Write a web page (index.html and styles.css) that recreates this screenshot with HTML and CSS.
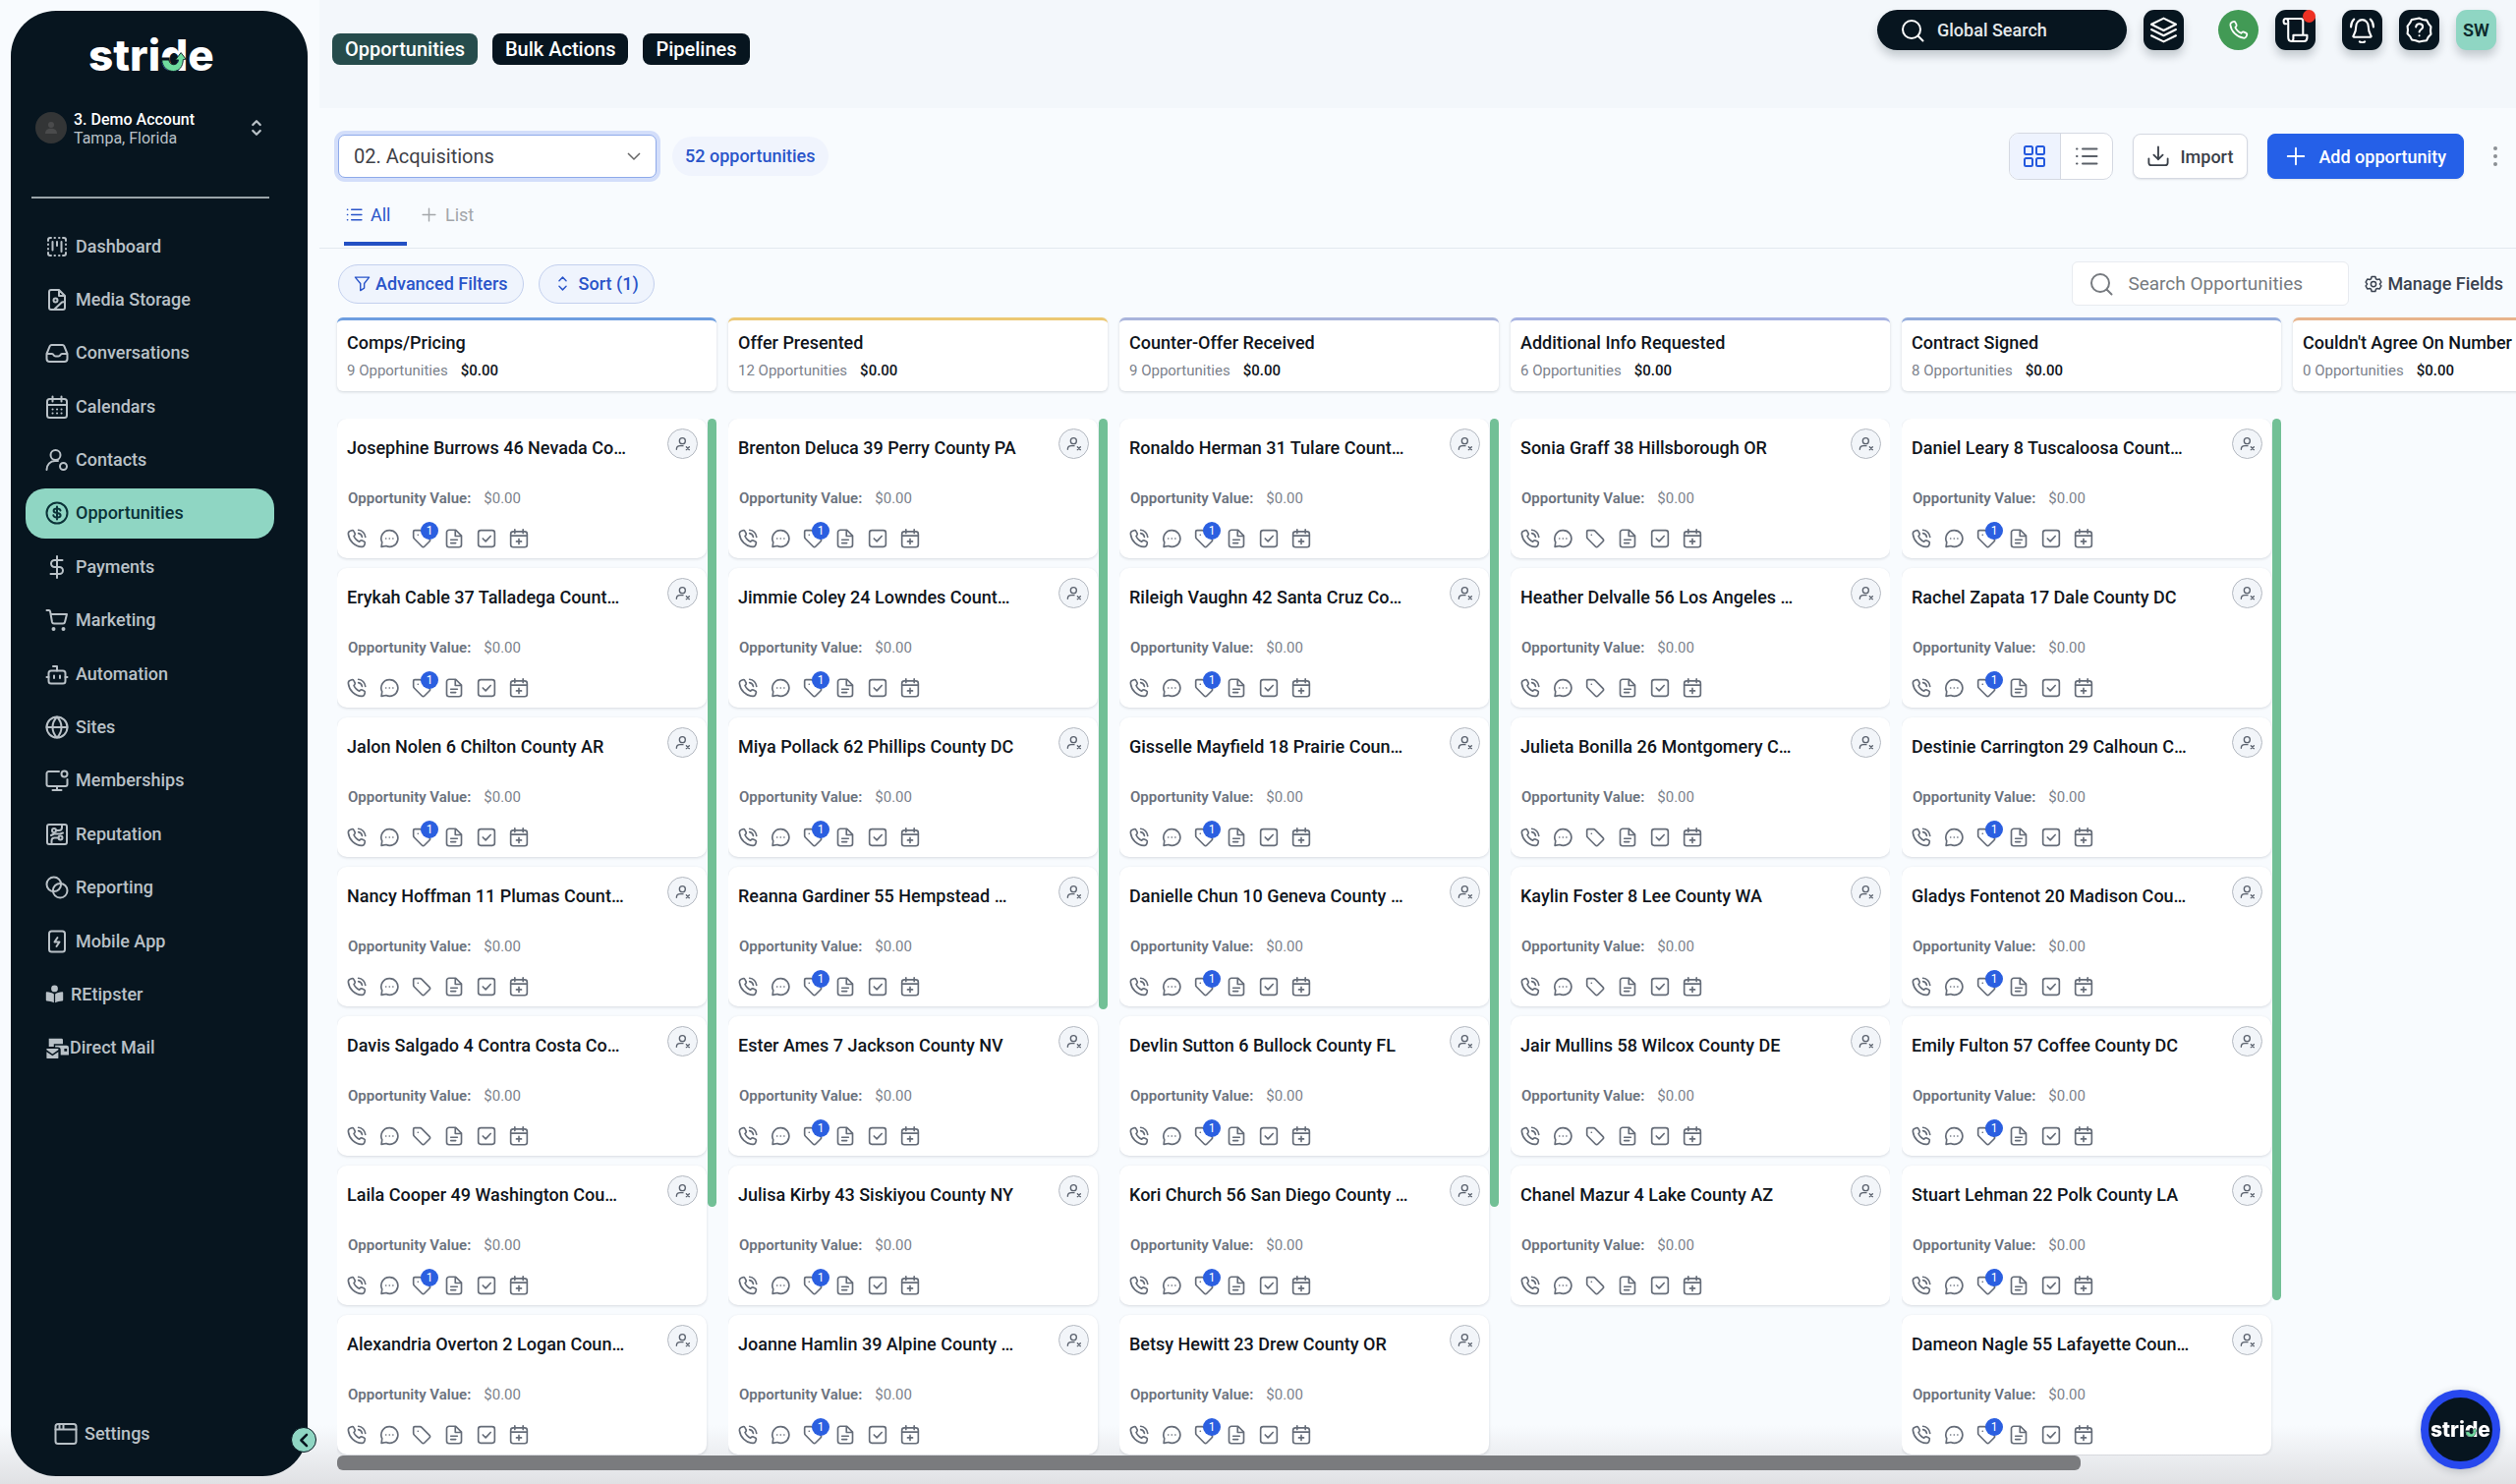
FILE: index.html
```html
<!DOCTYPE html>
<html lang="en">
<head>
    <meta charset="UTF-8">
    <meta name="viewport" content="width=device-width, initial-scale=1.0">
    <title>Opportunities - Stride</title>
    <link rel="stylesheet" href="styles.css">
</head>
<body>
    <!-- icon sprite -->
    <svg class="sprite" aria-hidden="true">
        <symbol id="i-dashboard" viewBox="0 0 24 24"><path d="M7.5 7v8.500M12 7v4M16.500 7v10M3 6V5a2 2 0 0 1 2-2h1M18 3h1a2 2 0 0 1 2 2v1M21 18v1a2 2 0 0 1-2 2h-1M6 21H5a2 2 0 0 1-2-2v-1M9.500 3h.5M14 3h.5M9.500 21h.5M14 21h.5M3 9.500v.5M3 14v.5M21 9.500v.5M21 14v.5"/></symbol>
        <symbol id="i-media" viewBox="0 0 24 24"><path d="M14 2H6a2 2 0 0 0-2 2v16a2 2 0 0 0 2 2h12a2 2 0 0 0 2-2V8zM14 2v6h6M20 14l-3 .5L9 22"/><circle cx="10.500" cy="12.500" r="2"/></symbol>
        <symbol id="i-inbox" viewBox="0 0 24 24"><path d="M1.500 13H7c.8 0 1.200.5 1.600 1.200.5.900 1 1.300 2 1.300h2.800c1 0 1.500-.4 2-1.300.4-.7.8-1.200 1.600-1.200h5.500M6.500 4h11a2 2 0 0 1 1.800 1.100L22.500 13v5a3 3 0 0 1-3 3h-15a3 3 0 0 1-3-3v-5l3.200-7.900A2 2 0 0 1 6.500 4z"/></symbol>
        <symbol id="i-calendar" viewBox="0 0 24 24"><rect x="2" y="4" width="20" height="19" rx="2.500"/><path d="M7.500 1.500v5M16.500 1.500v5M2 10h20M7.500 14.500h.1M12 14.500h.1M16.500 14.500h.1M7.500 18.500h.1M12 18.500h.1M16.500 18.500h.1"/></symbol>
        <symbol id="i-contact" viewBox="0 0 24 24"><circle cx="10.500" cy="7" r="5"/><path d="M1.500 22c0-5 3.500-9 8.500-9h3"/><circle cx="18.500" cy="18.500" r="3.500"/></symbol>
        <symbol id="i-coin" viewBox="0 0 24 24"><circle cx="12" cy="12" r="10.500"/><path d="M12 5.500v13M15.500 9.500C15.200 8.300 14 7.600 12 7.600c-2 0-3.400.8-3.400 2.200s1.100 2 3.400 2.200c2.400.2 3.600.9 3.600 2.300s-1.500 2.200-3.600 2.200c-2.200 0-3.600-.8-3.700-2.200"/></symbol>
        <symbol id="i-dollar" viewBox="0 0 24 24"><path d="M12 1v22M17.500 5h-8a3.500 3.500 0 0 0 0 7h5a3.500 3.500 0 0 1 0 7H5.500"/></symbol>
        <symbol id="i-cart" viewBox="0 0 24 24"><path d="M1.500 2h2.200a1.500 1.500 0 0 1 1.400 1.200L7 14a2 2 0 0 0 2 1.600h9a2 2 0 0 0 2-1.600L22 6H5.500"/><circle cx="8.500" cy="21" r="1"/><circle cx="18.500" cy="21" r="1"/></symbol>
        <symbol id="i-robot" viewBox="0 0 24 24"><rect x="3.500" y="8.500" width="17" height="13" rx="2.500"/><path d="M12 8.500V4H8M1.500 15h2M20.500 15h2M9 13.500v2.500M15 13.500v2.500"/></symbol>
        <symbol id="i-globe" viewBox="0 0 24 24"><circle cx="12" cy="12" r="10.500"/><path d="M1.500 12h21M12 1.500c3 3 4.500 6.500 4.500 10.500S15 19.500 12 22.500C9 19.500 7.500 16 7.500 12S9 4.500 12 1.500z"/></symbol>
        <symbol id="i-monitor" viewBox="0 0 24 24"><path d="M14 3H3.500a2 2 0 0 0-2 2v11a2 2 0 0 0 2 2h17a2 2 0 0 0 2-2v-5M12 18v4M7.500 22h9"/><circle cx="19.500" cy="5.500" r="3"/></symbol>
        <symbol id="i-circuit" viewBox="0 0 24 24"><rect x="2" y="2" width="20" height="20" rx="2"/><circle cx="9" cy="8" r="2"/><circle cx="15.500" cy="15.500" r="2"/><path d="M11 8h3a3 3 0 0 0 3-3V2.500M13.500 15.500H9.500a3 3 0 0 0-3 3v3M18 10.500l-3 1H9l-3 1.500"/></symbol>
        <symbol id="i-circles" viewBox="0 0 24 24"><circle cx="8.800" cy="8.800" r="7.300"/><circle cx="15.200" cy="15.200" r="7.300"/></symbol>
        <symbol id="i-mobile" viewBox="0 0 24 24"><rect x="4" y="1.500" width="16" height="21" rx="2.500"/><path d="M12.500 8l-3 4.500h5l-3 4.500"/></symbol>
        <symbol id="i-reader" viewBox="0 0 24 24"><g fill="currentColor" stroke="none"><circle cx="12" cy="5" r="4.300"/><path d="M11.200 12v11c-3-1.500-6-2-9-2.200A1.300 1.300 0 0 1 1 19.500v-9c0-.8.6-1.200 1.300-1.200 3.500.2 6.500 1 8.900 2.700zM12.800 12v11c3-1.500 6-2 9-2.200a1.300 1.300 0 0 0 1.200-1.300v-9c0-.8-.6-1.200-1.300-1.200-3.500.2-6.500 1-8.900 2.700z"/></g></symbol>
        <symbol id="i-mail" viewBox="0 0 26 24"><g fill="currentColor" stroke="none"><path d="M4 2h14a1.500 1.500 0 0 1 1.500 1.500V8H9.500v3H4z"/><path d="M11 9.500h12.500A2.500 2.500 0 0 1 26 12v8h-9v-5.500a3 3 0 0 0-3-3h-3zM21 13v3h3v-3z" fill-rule="evenodd"/><path d="M1.500 13h13v1.500L8 19l-6.500-4.500zM1.500 16.500L8 21l6.500-4.500V23a1 1 0 0 1-1 1h-11a1 1 0 0 1-1-1z"/></g></symbol>
        <symbol id="i-window" viewBox="0 0 24 24"><rect x="1.500" y="2" width="21" height="20" rx="2.500"/><path d="M1.500 7.500h21M5.500 2v5M9.500 2v5"/></symbol>
        <symbol id="i-updown" viewBox="0 0 24 24"><path d="M7 8l5-5 5 5M7 16l5 5 5-5"/></symbol>
        <symbol id="i-search" viewBox="0 0 24 24"><circle cx="11" cy="11" r="9"/><path d="M22.500 22.500l-5-5"/></symbol>
        <symbol id="i-layers" viewBox="0 0 26 26"><path d="M13 1.500l12 6-12 6-12-6zM1 12.500l12 6 12-6M1 18.500l12 6 12-6"/></symbol>
        <symbol id="i-phone" viewBox="0 0 24 24"><path d="M8.400 9c.7 1.500 1.600 2.800 2.800 4s2.500 2.100 4 2.800l.8-.9c.8-.8 1.500-1 2.500-.5l2.500 1.200c1 .5 1.300 1.300.9 2.300l-.7 1.700c-.6 1.300-1.700 2-3.200 1.800C10.400 20.500 3.600 13.700 2.700 6.200 2.500 4.700 3.100 3.600 4.500 3l1.700-.7c1-.4 1.800-.1 2.300.9l1.200 2.500c.5 1 .3 1.700-.5 2.500z"/></symbol>
        <symbol id="i-call" viewBox="0 0 24 24"><path d="M8.400 9c.7 1.500 1.600 2.800 2.800 4s2.500 2.100 4 2.800l.8-.9c.8-.8 1.500-1 2.500-.5l2.500 1.200c1 .5 1.300 1.300.9 2.300l-.7 2.400c-.6 1.300-1.700 2-3.200 1.800C9.400 21.500 2.600 14.700 1.700 6.700 1.500 5 2 3.600 3.500 3l2.200-.9c1-.4 2.100-.1 2.600.9l1.400 2.700c.5 1 .3 1.700-.5 2.500zM14 5.500a5.500 5.500 0 0 1 4.500 4.500M14 1.500c4.500.3 8 4 8.500 8.500"/></symbol>
        <symbol id="i-scroll" viewBox="0 0 26 26"><path d="M4 7H3.500C2 7 1.500 6 1.500 4.500S2 2 3.500 2h15c1.500 0 2 .8 2 2.500V17M3.500 2C5 2 6 3 6 4.500V20c0 2.500 1 4 3 4h12.500c2 0 3-1.500 3-3.500V18H11v3.500c0 1.500-.8 2.500-2 2.500"/></symbol>
        <symbol id="i-bell" viewBox="0 0 26 26"><path d="M10.500 24.500c1.500 1 3.500 1 5 0M2 10c0-3 1-5.500 3-7.500M24 10c0-3-1-5.500-3-7.500M19 9.500a6 6.500 0 0 0-12 0c0 5-1.500 7-2.700 9.200-.3.700 0 1.300.7 1.300h16c.7 0 1-.6.7-1.300C20.500 16.500 19 14.500 19 9.500z"/></symbol>
        <symbol id="i-help" viewBox="0 0 26 26"><path d="M13 1.500l3.500 1.300 3.900.700 1.700 3.300 2.400 3-.4 3.700.4 3.700-2.600 2.800-1.700 3.300-3.700.6L13 24.500l-3.500-1.200-3.700-.6-1.700-3.300-2.600-2.800.4-3.700-.4-3.700 2.400-3 1.700-3.300 3.900-.7z"/><path d="M9.800 10c.3-2 1.600-3 3.400-3s3.300 1.200 3.300 3c0 2.500-3.400 2.500-3.400 5M13.100 18.500v.1"/></symbol>
        <symbol id="i-grid" viewBox="0 0 24 24"><rect x="2" y="2" width="8" height="8" rx="1.500"/><rect x="14" y="2" width="8" height="8" rx="1.500"/><rect x="2" y="14" width="8" height="8" rx="1.500"/><rect x="14" y="14" width="8" height="8" rx="1.500"/></symbol>
        <symbol id="i-list" viewBox="0 0 24 24"><path d="M8 4.500h14.500M8 12h14.500M8 19.500h14.500M2 4.500h.5M2 12h.5M2 19.500h.5"/></symbol>
        <symbol id="i-import" viewBox="0 0 24 24"><path d="M1.500 14.500V19a3 3 0 0 0 3 3h15a3 3 0 0 0 3-3v-4.500M12 1.500v14M7 10.500l5 5 5-5"/></symbol>
        <symbol id="i-plus" viewBox="0 0 24 24"><path d="M12 3v18M3 12h18"/></symbol>
        <symbol id="i-filter" viewBox="0 0 24 24"><path d="M2 3h20l-7 9v6.500L9.500 22V12z"/></symbol>
        <symbol id="i-gear" viewBox="0 0 24 24"><circle cx="12" cy="12" r="3.500"/><path d="M9.500 2h5l.8 3 2 1.100 3-.8 2.200 4.200-2 2.500 2 2.500-2.200 4.200-3-.8-2 1.100-.8 3h-5l-.8-3-2-1.100-3 .8-2.200-4.200 2-2.500-2-2.500 2.200-4.200 3 .8 2-1.100z"/></symbol>
        <symbol id="i-chat" viewBox="0 0 24 24"><path d="M12.500 2a10 10 0 1 1-4.200 19L2.500 22l.8-5.500A10 10 0 0 1 12.500 2zM8 12h.1M12.300 12h.1M16.600 12h.1"/></symbol>
        <symbol id="i-tag" viewBox="0 0 24 24"><path d="M2 3.500V10c0 .8.300 1.500.8 2l9.500 9.600c1 1 2.200 1 3.200 0l6-6c1-1 1-2.200 0-3.200L12 2.800A3 3 0 0 0 10 2H3.500A1.500 1.500 0 0 0 2 3.500zM7.500 7.500h.1"/></symbol>
        <symbol id="i-doc" viewBox="0 0 24 24"><path d="M14 1.500H6a3 3 0 0 0-3 3v15a3 3 0 0 0 3 3h12a3 3 0 0 0 3-3V8.500zM13.500 1.500V9H21M8 13.500h8M8 17.500h6"/></symbol>
        <symbol id="i-check" viewBox="0 0 24 24"><rect x="2" y="2" width="20" height="20" rx="3"/><path d="M7.500 12l3.500 3.500L17 9"/></symbol>
        <symbol id="i-calplus" viewBox="0 0 24 24"><rect x="2" y="3.500" width="20" height="19" rx="3"/><path d="M7 1v4.500M17 1v4.500M2 8.500h20M12 12.500v6M9 15.500h6"/></symbol>
        <symbol id="i-userx" viewBox="0 0 24 24"><circle cx="11" cy="7" r="4.500"/><path d="M2 20c0-3.500 2-5.500 5.500-5.500H12M17 16l4.500 4.500M21.500 16L17 20.500"/></symbol>
        <symbol id="i-back" viewBox="0 0 24 24"><path d="M16 3l-9 9 9 9"/></symbol>
        <symbol id="i-arc" viewBox="0 0 30 30"><path class="arc-gap" d="M0 13h10v5H0z"/><path class="arc-swoosh" d="M1 16h8c.6 3.500 2.800 5.300 5.600 5.300 3.200 0 5.300-2.300 5.500-5.500L16.500 16 23 7.500l5.800 7.500-3.300.4C25.300 23.500 21 29 14.300 29S1.300 24 1 16z"/></symbol>
    </svg>

    <div class="app">
        <aside class="sidebar">
            <div class="logo">stri<span class="logo-d">d<svg class="logo-arc"><use href="#i-arc"/></svg></span>e</div>
            <button class="account" type="button">
                <span class="account-avatar"><svg viewBox="0 0 24 24"><circle cx="12" cy="8" r="4"/><path d="M4 20c0-5 3-7 8-7s8 2 8 7z"/></svg></span>
                <span class="account-text">
                    <strong>3. Demo Account</strong>
                    <span>Tampa, Florida</span>
                </span>
                <svg class="icon"><use href="#i-updown"/></svg>
            </button>
            <nav class="nav">
                <a href="#"><svg class="icon"><use href="#i-dashboard"/></svg>Dashboard</a>
                <a href="#"><svg class="icon"><use href="#i-media"/></svg>Media Storage</a>
                <a href="#"><svg class="icon"><use href="#i-inbox"/></svg>Conversations</a>
                <a href="#"><svg class="icon"><use href="#i-calendar"/></svg>Calendars</a>
                <a href="#"><svg class="icon"><use href="#i-contact"/></svg>Contacts</a>
                <a href="#" class="active"><svg class="icon"><use href="#i-coin"/></svg>Opportunities</a>
                <a href="#"><svg class="icon"><use href="#i-dollar"/></svg>Payments</a>
                <a href="#"><svg class="icon"><use href="#i-cart"/></svg>Marketing</a>
                <a href="#"><svg class="icon"><use href="#i-robot"/></svg>Automation</a>
                <a href="#"><svg class="icon"><use href="#i-globe"/></svg>Sites</a>
                <a href="#"><svg class="icon"><use href="#i-monitor"/></svg>Memberships</a>
                <a href="#"><svg class="icon"><use href="#i-circuit"/></svg>Reputation</a>
                <a href="#"><svg class="icon"><use href="#i-circles"/></svg>Reporting</a>
                <a href="#"><svg class="icon"><use href="#i-mobile"/></svg>Mobile App</a>
                <a href="#"><svg class="icon small"><use href="#i-reader"/></svg>REtipster</a>
                <a href="#" class="tight"><svg class="icon"><use href="#i-mail"/></svg>Direct Mail</a>
            </nav>
            <a href="#" class="settings"><svg class="icon"><use href="#i-window"/></svg>Settings</a>
            <button class="collapse" type="button" aria-label="Collapse sidebar"><svg class="icon"><use href="#i-back"/></svg></button>
        </aside>

        <main class="main">
            <header class="topbar">
                <nav class="pills">
                    <a href="#" class="current">Opportunities</a>
                    <a href="#">Bulk Actions</a>
                    <a href="#">Pipelines</a>
                </nav>
                <div class="top-actions">
                    <label class="global-search">
                        <svg class="icon"><use href="#i-search"/></svg>
                        <input type="text" placeholder="Global Search" aria-label="Global Search">
                    </label>
                    <button class="tile layers" type="button" aria-label="Layers"><svg class="icon"><use href="#i-layers"/></svg></button>
                    <button class="tile phone" type="button" aria-label="Phone"><svg class="icon"><use href="#i-phone"/></svg></button>
                    <button class="tile updates" type="button" aria-label="Updates"><svg class="icon"><use href="#i-scroll"/></svg><span class="dot"></span></button>
                    <button class="tile" type="button" aria-label="Notifications"><svg class="icon"><use href="#i-bell"/></svg></button>
                    <button class="tile" type="button" aria-label="Help"><svg class="icon"><use href="#i-help"/></svg></button>
                    <button class="tile user" type="button">SW</button>
                </div>
            </header>

            <section class="toolbar">
                <div class="pipeline">
                    <select class="pipeline-select" aria-label="Pipeline">
                        <option>02. Acquisitions</option>
                    </select>
                    <span class="count">52 opportunities</span>
                </div>
                <div class="toolbar-actions">
                    <div class="view-toggle">
                        <button class="on" type="button" aria-label="Board view"><svg class="icon"><use href="#i-grid"/></svg></button>
                        <button type="button" aria-label="List view"><svg class="icon"><use href="#i-list"/></svg></button>
                    </div>
                    <button class="btn" type="button"><svg class="icon"><use href="#i-import"/></svg>Import</button>
                    <button class="btn primary" type="button"><svg class="icon"><use href="#i-plus"/></svg>Add opportunity</button>
                    <button class="more" type="button" aria-label="More"><i></i><i></i><i></i></button>
                </div>
            </section>

            <div class="tabs">
                <button class="tab active" type="button"><svg class="icon"><use href="#i-list"/></svg>All</button>
                <button class="tab" type="button"><svg class="icon"><use href="#i-plus"/></svg>List</button>
            </div>

            <div class="filters">
                <button class="chip" type="button"><svg class="icon"><use href="#i-filter"/></svg>Advanced Filters</button>
                <button class="chip sort" type="button"><svg class="icon"><use href="#i-updown"/></svg>Sort (1)</button>
                <label class="search">
                    <svg class="icon"><use href="#i-search"/></svg>
                    <input type="text" placeholder="Search Opportunities" aria-label="Search Opportunities">
                </label>
                <button class="manage" type="button"><svg class="icon"><use href="#i-gear"/></svg>Manage Fields</button>
            </div>

            <div class="board" id="board"></div>
            <div class="board-scroll"><div class="board-thumb"></div></div>
        </main>
    </div>

    <button class="chat-widget" type="button" aria-label="Stride chat"><span class="logo">stri<span class="logo-d">d<svg class="logo-arc"><use href="#i-arc"/></svg></span>e</span></button>

    <script src="script.js"></script>
</body>
</html>
```
FILE: styles.css
```css
* {
    box-sizing: border-box;
}
body {
    margin: 0;
    font-family: Roboto, "Liberation Sans", sans-serif;
    font-size: 18px;
    color: #10151c;
    background: #f8fbfe;
}
button, input, select {
    font: inherit;
    color: inherit;
    border: none;
    background: none;
    padding: 0;
    margin: 0;
}
button {
    cursor: pointer;
}
a {
    color: inherit;
    text-decoration: none;
}
.sprite {
    display: none;
}
.icon {
    width: 24px;
    height: 24px;
    flex: none;
    fill: none;
    stroke: currentColor;
    stroke-width: 2;
    stroke-linecap: round;
    stroke-linejoin: round;
}
.app {
    display: flex;
    height: 100vh;
    overflow: hidden;
    background: linear-gradient(to bottom, rgba(220,222,226,0) calc(100% - 60px), #e0e1e4 100%);
}

/* sidebar */
.sidebar {
    position: relative;
    display: flex;
    flex-direction: column;
    width: 302px;
    flex: none;
    margin: 11px 12px 8px 11px;
    padding: 18px 34px 18px 15px;
    border-radius: 46px;
    background: #07151f;
    color: #b9c1c7;
}
.logo {
    font-family: Inter, sans-serif;
    font-weight: 800;
    font-size: 44px;
    line-height: 54px;
    color: #fff;
}
.sidebar .logo {
    margin-left: 64px;
}
.logo-d {
    position: relative;
    display: inline-block;
}
.logo-arc {
    position: absolute;
    left: 0;
    bottom: 0.22em;
    width: 0.64em;
    height: 0.6em;
}
.arc-gap {
    fill: #07151f;
}
.arc-swoosh {
    fill: #6fdc9f;
    stroke: #07151f;
    stroke-width: 1;
}
.account {
    display: flex;
    align-items: center;
    gap: 7px;
    height: 50px;
    margin: 22px 0 47px;
    padding: 0 9px 0 10px;
    text-align: left;
}
.account-avatar {
    display: flex;
    align-items: center;
    justify-content: center;
    width: 32px;
    height: 32px;
    border-radius: 50%;
    background: #333536;
}
.account-avatar svg {
    width: 18px;
    height: 18px;
    fill: #4a4b4c;
}
.account-text {
    flex: 1;
    display: flex;
    flex-direction: column;
    padding-top: 2px;
    font-size: 16px;
    line-height: 19px;
}
.account-text strong {
    font-weight: 500;
    color: #fff;
}
.account .icon {
    width: 18px;
    height: 18px;
    stroke-width: 3;
}
.nav {
    display: flex;
    flex-direction: column;
    justify-content: space-between;
    height: 890px;
    padding-top: 23px;
    position: relative;
}
.nav::before {
    content: "";
    position: absolute;
    top: -2px;
    left: 6px;
    right: 5px;
    height: 2px;
    background: #9aa4a9;
}
.nav a, .settings {
    display: flex;
    align-items: center;
    gap: 7px;
    height: 51px;
    padding-left: 20px;
    border-radius: 20px;
    font-weight: 500;
    line-height: 24px;
}
.nav a.active {
    background: #8fd6c3;
    color: #0b3338;
}
.nav .small {
    width: 19px;
    height: 19px;
}
.nav a.tight {
    gap: 1px;
}
.settings {
    margin-top: auto;
    padding-left: 29px;
}
.collapse {
    position: absolute;
    right: -9px;
    bottom: 24px;
    display: flex;
    align-items: center;
    justify-content: center;
    width: 26px;
    height: 26px;
    border-radius: 50%;
    border: 1px solid #07151f;
    background: #8fd6c3;
    color: #07151f;
}
.collapse .icon {
    width: 15px;
    height: 15px;
    stroke-width: 4;
}

/* top bar */
.main {
    flex: 1;
    min-width: 0;
    display: flex;
    flex-direction: column;
}
.topbar {
    display: flex;
    align-items: flex-start;
    justify-content: space-between;
    height: 110px;
    padding: 10px 20px 0 13px;
    background: #f3f7fb;
}
.pills {
    display: flex;
    gap: 15px;
    margin-top: 24px;
}
.pills a {
    padding: 0 13px;
    border-radius: 8px;
    background: #07151f;
    color: #fff;
    font-size: 20px;
    font-weight: 500;
    line-height: 32px;
}
.pills a.current {
    background: #264c4c;
}
.top-actions {
    display: flex;
    align-items: center;
    gap: 17px;
}
.global-search {
    display: flex;
    align-items: center;
    gap: 13px;
    width: 254px;
    height: 41px;
    padding: 0 24px;
    border-radius: 21px;
    background: #07151f;
    color: #fff;
    box-shadow: 0 6px 10px rgba(7,21,31,0.2);
}
.global-search input {
    width: 100%;
    min-width: 0;
    font-weight: 500;
    color: #fff;
}
.global-search input::placeholder {
    color: #e4e8ea;
    opacity: 1;
}
.tile {
    position: relative;
    display: flex;
    align-items: center;
    justify-content: center;
    width: 41px;
    height: 41px;
    border-radius: 11px;
    background: #07151f;
    color: #fff;
    box-shadow: 0 6px 10px rgba(7,21,31,0.2);
}
.tile .icon {
    width: 27px;
    height: 27px;
}
.tile.layers {
    margin-right: 18px;
}
.tile.phone {
    border-radius: 50%;
    background: #429a55;
    box-shadow: none;
}
.tile.phone .icon {
    width: 21px;
    height: 21px;
}
.tile.updates {
    margin-right: 10px;
}
.tile .dot {
    position: absolute;
    top: 0;
    right: 0;
    width: 13px;
    height: 13px;
    border-radius: 50%;
    background: #ee3124;
}
.tile.user {
    background: #8fd6c3;
    color: #0c2a2c;
    font-weight: 600;
}

/* toolbar */
.toolbar {
    display: flex;
    align-items: center;
    justify-content: space-between;
    padding: 25px 16px 0 19px;
}
.pipeline, .toolbar-actions {
    display: flex;
    align-items: center;
}
.pipeline {
    gap: 16px;
}
.toolbar-actions {
    gap: 20px;
}
.pipeline-select {
    width: 324px;
    height: 44px;
    padding: 0 15px;
    border: 1px solid #8eaaea;
    border-radius: 7px;
    box-shadow: 0 0 0 4px #d3defa;
    font-size: 20px;
    color: #3f4247;
    appearance: none;
    background: #fff url("data:image/svg+xml,%3Csvg xmlns='http://www.w3.org/2000/svg' viewBox='0 0 16 16' fill='none' stroke='%23666' stroke-width='1.500'%3E%3Cpath d='M2 5l6 6 6-6'/%3E%3C/svg%3E") no-repeat right 14px center / 16px;
}
.count {
    padding: 0 13px;
    border-radius: 20px;
    background: #f0f4fd;
    color: #2a55c9;
    font-weight: 500;
    line-height: 40px;
}
.view-toggle {
    display: flex;
    height: 48px;
    border: 1px solid #d5d9e2;
    border-radius: 10px;
    background: #fff;
    overflow: hidden;
}
.view-toggle button {
    display: flex;
    align-items: center;
    justify-content: center;
    width: 52px;
    color: #5b6068;
}
.view-toggle button.on {
    background: #eef3fe;
    border-right: 1px solid #d5d9e2;
    color: #2459de;
}
.btn {
    display: flex;
    align-items: center;
    gap: 12px;
    height: 46px;
    padding: 0 14px;
    border: 1px solid #d5d9e2;
    border-radius: 8px;
    background: #fff;
    box-shadow: 0 1px 2px rgba(16,24,40,0.1);
    color: #3a4049;
    font-weight: 500;
}
.btn .icon {
    width: 22px;
    height: 22px;
}
.btn.primary {
    padding: 0 17px;
    background: #2560e8;
    border-color: #2560e8;
    color: #fff;
}
.more {
    display: flex;
    flex-direction: column;
    align-items: center;
    gap: 4px;
    width: 10px;
    margin-left: 7px;
}
.more i {
    width: 4px;
    height: 4px;
    border-radius: 50%;
    background: #8b8f94;
}
.tabs {
    display: flex;
    gap: 14px;
    height: 70px;
    padding: 7px 0 0 25px;
    border-bottom: 1px solid #e3e8ef;
}
.tab {
    display: flex;
    align-items: center;
    gap: 8px;
    height: 60px;
    padding-bottom: 4px;
    color: #a3a6aa;
}
.tab.active {
    width: 64px;
    padding-left: 2px;
    border-bottom: 4px solid #2350c4;
    padding-bottom: 0;
    color: #2a55c9;
}
.tab .icon {
    width: 17px;
    height: 17px;
}

/* filters */
.filters {
    display: flex;
    align-items: center;
    padding: 13px 13px 0 19px;
}
.chip {
    display: flex;
    align-items: center;
    gap: 5px;
    height: 40px;
    margin-right: 15px;
    padding: 0 15px;
    border: 1px solid #c3d0ee;
    border-radius: 20px;
    background: #eff4fd;
    color: #2a55c9;
    font-weight: 500;
}
.chip.sort {
    gap: 8px;
}
.chip .icon {
    width: 17px;
    height: 17px;
}
.search {
    display: flex;
    align-items: center;
    gap: 15px;
    width: 282px;
    height: 45px;
    margin-left: auto;
    margin-right: 16px;
    padding: 0 17px;
    border: 1px solid #e8ebf0;
    border-radius: 6px;
    background: #fff;
    color: #777b80;
}
.search input {
    width: 100%;
    min-width: 0;
    font-size: 19px;
}
.search input::placeholder {
    color: #777b80;
    opacity: 1;
}
.manage {
    display: flex;
    align-items: center;
    gap: 5px;
    font-weight: 500;
    color: #3a4250;
}
.manage .icon {
    width: 18px;
    height: 18px;
}

/* board */
.board {
    flex: 1;
    min-height: 0;
    display: flex;
    gap: 12px;
    margin-top: 12px;
    padding-left: 18px;
    overflow: hidden;
}
.column {
    display: flex;
    flex-direction: column;
    width: 386px;
    flex: none;
}
.column-head {
    height: 75px;
    margin-bottom: 28px;
    padding: 11px 10px 0;
    border-top: 3px solid #6d9ee0;
    border-radius: 6px;
    background: #fff;
    box-shadow: 0 1px 3px rgba(16,24,40,0.16);
}
.column-head h2 {
    margin: 0 0 6px;
    font-size: 18px;
    font-weight: 500;
    line-height: 24px;
}
.column-head p {
    display: flex;
    gap: 13px;
    margin: 0;
    font-size: 15px;
    line-height: 20px;
    color: #7c828c;
}
.column-head strong {
    font-weight: 500;
    color: #10151c;
}
.column-body {
    flex: 1;
    min-height: 0;
    display: flex;
    gap: 1px;
    overflow: hidden;
}
.cards {
    flex: 1;
    min-width: 0;
    display: flex;
    flex-direction: column;
    gap: 10px;
}
.column-thumb {
    width: 9px;
    border-radius: 5px;
    background: #72c096;
}
.card {
    flex: none;
    height: 142px;
    padding: 10px 9px 10px 10px;
    border-radius: 10px;
    background: #fff;
    box-shadow: 0 1px 3px rgba(16,24,40,0.14);
}
.card-top {
    display: flex;
    justify-content: space-between;
}
.card h3 {
    margin: 8px 0 0;
    font-size: 18px;
    font-weight: 500;
    line-height: 24px;
}
.owner {
    display: flex;
    align-items: center;
    justify-content: center;
    width: 31px;
    height: 31px;
    border: 1px solid #b4b9c1;
    border-radius: 50%;
    background: #f2f5f9;
    color: #5a616d;
}
.owner .icon {
    width: 16px;
    height: 16px;
}
.value {
    display: flex;
    gap: 13px;
    margin: 29px 0 21px 1px;
    font-size: 15px;
    line-height: 20px;
    color: #7c828c;
}
.value strong {
    font-weight: 600;
    color: #6b727d;
}
.card-icons {
    display: flex;
    gap: 13px;
    color: #656c78;
}
.card-icons button {
    position: relative;
    display: flex;
    width: 20px;
    height: 20px;
}
.card-icons .icon {
    width: 20px;
    height: 20px;
}
.badge {
    position: absolute;
    top: -7px;
    left: 9px;
    width: 18px;
    height: 18px;
    border-radius: 50%;
    background: #2b5fe0;
    color: #fff;
    font-size: 12px;
    line-height: 18px;
    text-align: center;
}
.board-scroll {
    margin: 0 0 14px 18px;
}
.board-thumb {
    width: 80%;
    height: 15px;
    border-radius: 6px;
    background: #7a7b7e;
}

.chat-widget {
    position: fixed;
    right: 16px;
    bottom: 15px;
    display: flex;
    align-items: center;
    justify-content: center;
    width: 81px;
    height: 81px;
    border: 8px solid #2748ee;
    border-radius: 50%;
    background: #07151f;
    box-shadow: 0 2px 8px rgba(16,24,40,0.2);
}
.chat-widget .logo {
    font-size: 21px;
    line-height: 26px;
}
```
FILE: script.js
```js
// tagged: which cards carry a tag badge; thumb: share of the column the scroll thumb covers
const columns = [
    {
        title: 'Comps/Pricing', total: 9, color: '#6d9ee0', thumb: 76, tagged: [1, 1, 1, 0, 0, 1, 0],
        cards: ['Josephine Burrows 46 Nevada Co…', 'Erykah Cable 37 Talladega Count…', 'Jalon Nolen 6 Chilton County AR', 'Nancy Hoffman 11 Plumas Count…', 'Davis Salgado 4 Contra Costa Co…', 'Laila Cooper 49 Washington Cou…', 'Alexandria Overton 2 Logan Coun…']
    },
    {
        title: 'Offer Presented', total: 12, color: '#ecc873', thumb: 57, tagged: [1, 1, 1, 1, 1, 1, 1],
        cards: ['Brenton Deluca 39 Perry County PA', 'Jimmie Coley 24 Lowndes Count…', 'Miya Pollack 62 Phillips County DC', 'Reanna Gardiner 55 Hempstead …', 'Ester Ames 7 Jackson County NV', 'Julisa Kirby 43 Siskiyou County NY', 'Joanne Hamlin 39 Alpine County …']
    },
    {
        title: 'Counter-Offer Received', total: 9, color: '#a9b4dc', thumb: 76, tagged: [1, 1, 1, 1, 1, 1, 1],
        cards: ['Ronaldo Herman 31 Tulare Count…', 'Rileigh Vaughn 42 Santa Cruz Co…', 'Gisselle Mayfield 18 Prairie Coun…', 'Danielle Chun 10 Geneva County …', 'Devlin Sutton 6 Bullock County FL', 'Kori Church 56 San Diego County …', 'Betsy Hewitt 23 Drew County OR']
    },
    {
        title: 'Additional Info Requested', total: 6, color: '#a5b1e2', thumb: 0, tagged: [0, 0, 0, 0, 0, 0],
        cards: ['Sonia Graff 38 Hillsborough OR', 'Heather Delvalle 56 Los Angeles …', 'Julieta Bonilla 26 Montgomery C…', 'Kaylin Foster 8 Lee County WA', 'Jair Mullins 58 Wilcox County DE', 'Chanel Mazur 4 Lake County AZ']
    },
    {
        title: 'Contract Signed', total: 8, color: '#93abdc', thumb: 85, tagged: [1, 1, 1, 1, 1, 1, 1],
        cards: ['Daniel Leary 8 Tuscaloosa Count…', 'Rachel Zapata 17 Dale County DC', 'Destinie Carrington 29 Calhoun C…', 'Gladys Fontenot 20 Madison Cou…', 'Emily Fulton 57 Coffee County DC', 'Stuart Lehman 22 Polk County LA', 'Dameon Nagle 55 Lafayette Coun…']
    },
    { title: "Couldn't Agree On Number", total: 0, color: '#e8b48c', thumb: 0, tagged: [], cards: [] }
];

const actions = [['call', 'Call'], ['chat', 'Message'], ['tag', 'Tags'], ['doc', 'Notes'], ['check', 'Tasks'], ['calplus', 'Appointments']];

function icon(name) {
    return `<svg class="icon"><use href="#i-${name}"/></svg>`;
}

function renderCard(name, tagged) {
    const buttons = actions.map(([id, label]) =>
        `<button type="button" aria-label="${label}">${icon(id)}${id === 'tag' && tagged ? '<span class="badge">1</span>' : ''}</button>`
    ).join('');
    return `
        <article class="card">
            <div class="card-top">
                <h3>${name}</h3>
                <button class="owner" type="button" aria-label="Assign owner">${icon('userx')}</button>
            </div>
            <div class="value"><strong>Opportunity Value:</strong><span>$0.00</span></div>
            <div class="card-icons">${buttons}</div>
        </article>`;
}

document.getElementById('board').innerHTML = columns.map(col => `
    <section class="column">
        <header class="column-head" style="border-top-color: ${col.color}">
            <h2>${col.title}</h2>
            <p><span>${col.total} Opportunities</span><strong>$0.00</strong></p>
        </header>
        <div class="column-body">
            <div class="cards">${col.cards.map((name, i) => renderCard(name, col.tagged[i])).join('')}</div>
            ${col.thumb ? `<div class="column-thumb" style="height: ${col.thumb}%"></div>` : ''}
        </div>
    </section>`).join('');
```
